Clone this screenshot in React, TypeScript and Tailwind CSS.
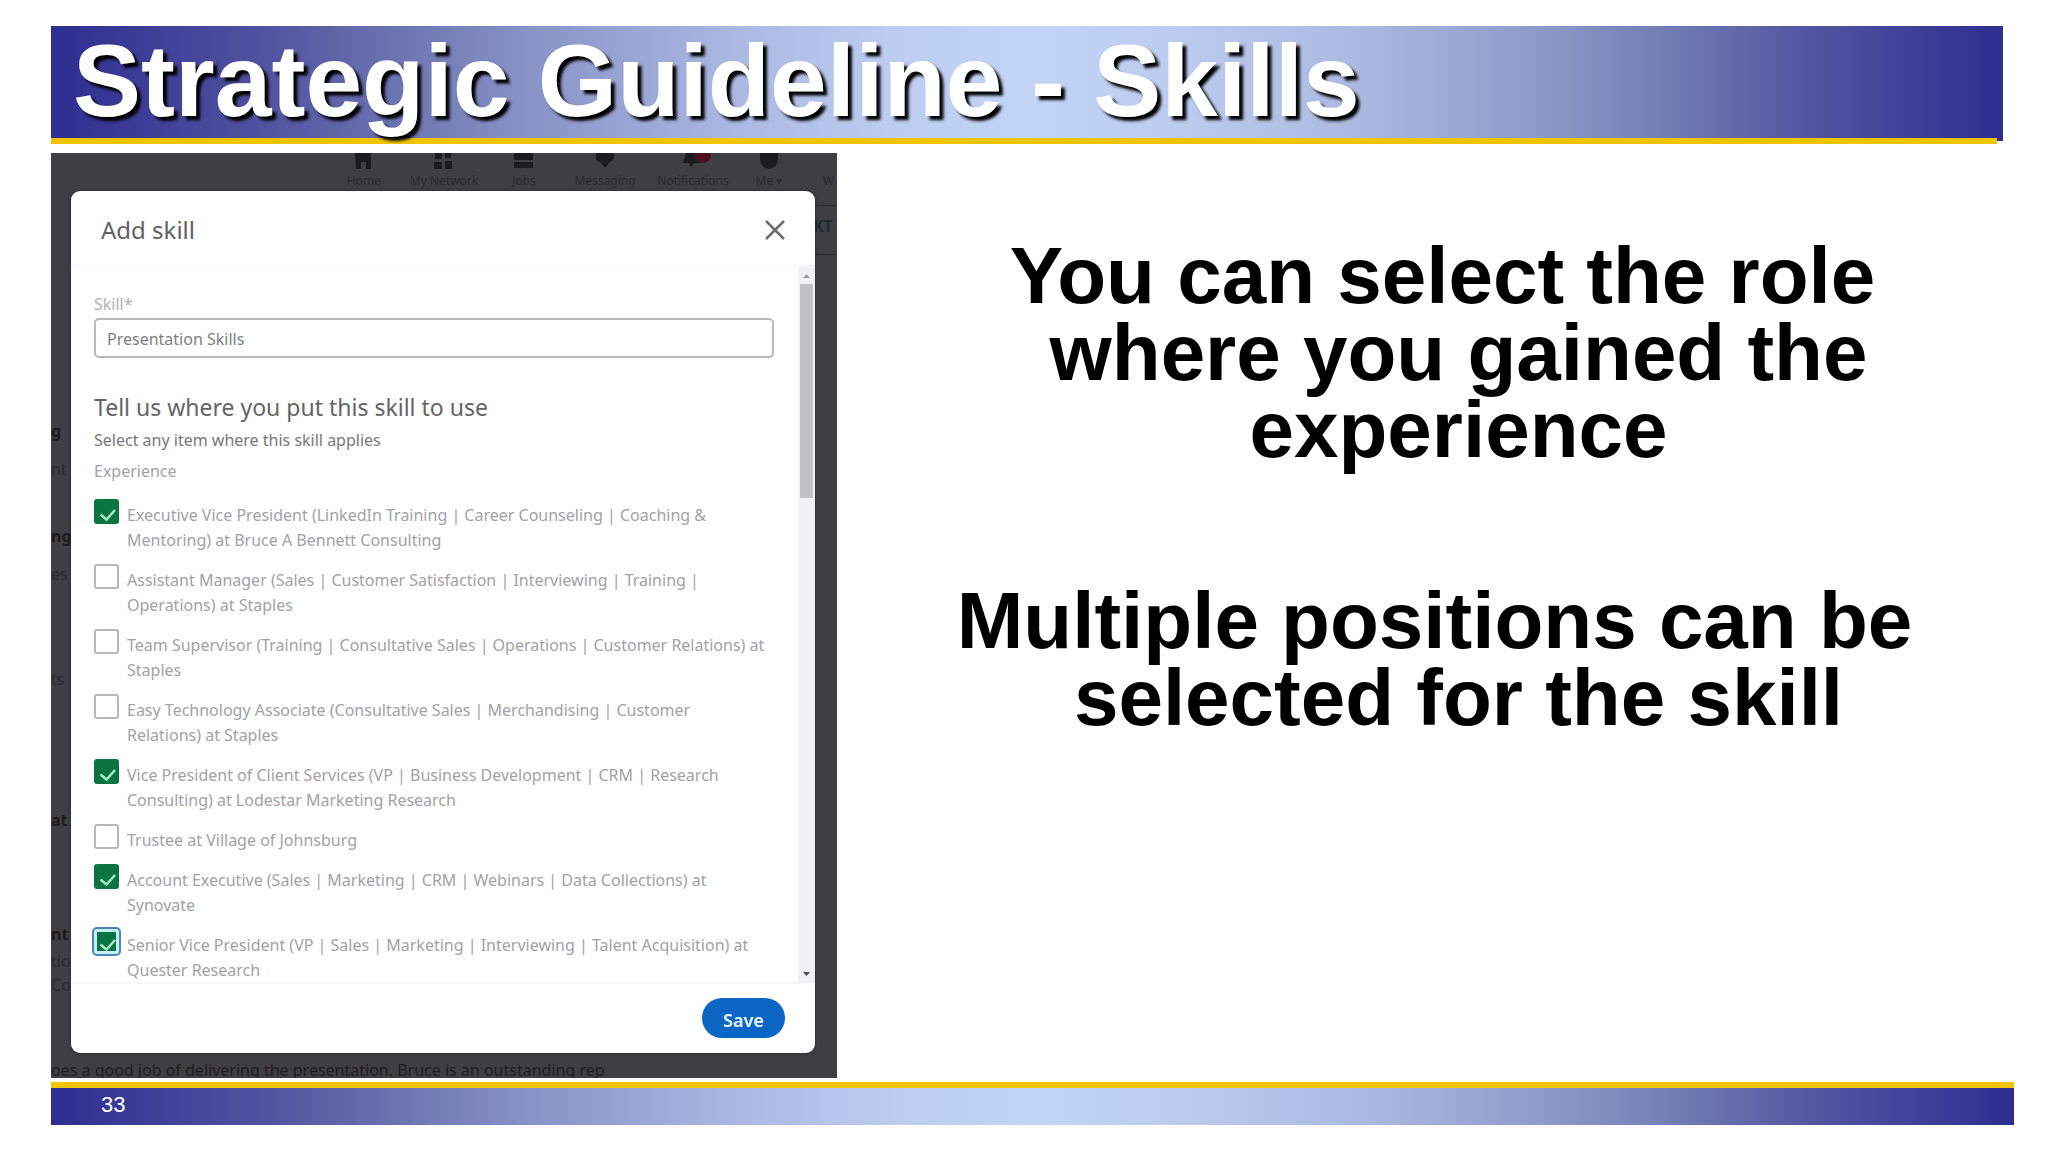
import { useState } from "react";

const BAR =
  "bg-[linear-gradient(to_right,#2e2d91_0%,#5153a0_11%,#717ab4_19%,#8691c5_24%,#abb8e2_35%,#bccdf0_43%,#c2d5f7_50%,#bccdf0_57%,#abb9e0_67%,#8e9bc9_76%,#7581b6_82%,#5255a0_90%,#2e2d91_100%)]";

type Item = { lines: string[]; checked: boolean; focused?: boolean };

const ITEMS: Item[] = [
  {
    lines: [
      "Executive Vice President (LinkedIn Training | Career Counseling | Coaching &",
      "Mentoring) at Bruce A Bennett Consulting",
    ],
    checked: true,
  },
  {
    lines: [
      "Assistant Manager (Sales | Customer Satisfaction | Interviewing | Training |",
      "Operations) at Staples",
    ],
    checked: false,
  },
  {
    lines: [
      "Team Supervisor (Training | Consultative Sales | Operations | Customer Relations) at",
      "Staples",
    ],
    checked: false,
  },
  {
    lines: [
      "Easy Technology Associate (Consultative Sales | Merchandising | Customer",
      "Relations) at Staples",
    ],
    checked: false,
  },
  {
    lines: [
      "Vice President of Client Services (VP | Business Development | CRM | Research",
      "Consulting) at Lodestar Marketing Research",
    ],
    checked: true,
  },
  { lines: ["Trustee at Village of Johnsburg"], checked: false },
  {
    lines: [
      "Account Executive (Sales | Marketing | CRM | Webinars | Data Collections) at",
      "Synovate",
    ],
    checked: true,
  },
  {
    lines: [
      "Senior Vice President (VP | Sales | Marketing | Interviewing | Talent Acquisition) at",
      "Quester Research",
    ],
    checked: true,
    focused: true,
  },
];

function SkillOption({ item, id }: { item: Item; id: string }) {
  const [checked, setChecked] = useState(item.checked);
  return (
    <li className="flex items-start gap-2 pb-[11px]">
      <span className="relative size-[25px] shrink-0">
        <input
          id={id}
          type="checkbox"
          checked={checked}
          onChange={(e) => setChecked(e.target.checked)}
          className={
            item.focused
              ? "block size-[25px] appearance-none rounded-[3px] border-[3px] border-[#c4f0f2] bg-white outline-2 outline-[#4a86b8] checked:bg-[#0b7443]"
              : "block size-[25px] appearance-none rounded-[3px] border-2 border-[#b8b7ba] bg-white checked:border-[#0b7443] checked:bg-[#0b7443]"
          }
        />
        {checked && (
          <svg
            viewBox="0 0 25 25"
            className="pointer-events-none absolute inset-0 size-full"
            fill="none"
            stroke="#a9ecc4"
            strokeWidth="2.5"
          >
            <path d="M6.5 15.500 L12.500 20.500 L21 11" />
          </svg>
        )}
      </span>
      <label htmlFor={id} className="pt-1 whitespace-nowrap">
        {item.lines.map((line) => (
          <span key={line} className="block">
            {line}
          </span>
        ))}
      </label>
    </li>
  );
}

const NAV = [
  { label: "Home", left: "left-[273px]", icon: "M1 0H17V16H12V9H7V16H2Z" },
  { label: "My Network", left: "left-[353px]", icon: "M1 0H8V6H1ZM11 0H17V5H11ZM0 9H8V16H0ZM11 8H18V16H11Z" },
  { label: "Jobs", left: "left-[433px]", icon: "M0 0H19V7H0ZM0 9H19V15H0Z" },
  { label: "Messaging", left: "left-[514px]", icon: "M1 0H19V6L14 10L10 15L6 10L1 7Z" },
  { label: "Notifications", left: "left-[602px]", icon: "M3 0H17L19 10H11L8 14L6 10H0Z" },
  { label: "Me ▾", left: "left-[678px]", icon: "M1 0H19V6A9 10 0 0 1 1 6Z" },
];

const EDGE = [
  { text: "g", top: "top-[266px]", bold: true },
  { text: "nt", top: "top-[304px]", bold: false },
  { text: "ng", top: "top-[371px]", bold: true },
  { text: "es", top: "top-[409px]", bold: false },
  { text: "ts", top: "top-[514px]", bold: false },
  { text: "at", top: "top-[655px]", bold: true },
  { text: "nt", top: "top-[769px]", bold: true },
  { text: "tio", top: "top-[796px]", bold: false },
  { text: "Co", top: "top-[820px]", bold: false },
];

function Backdrop() {
  return (
    <div aria-hidden="true" className="absolute inset-0 overflow-hidden text-[#2b2b2d]">
      {NAV.map((n) => (
        <div key={n.label} className={`absolute top-0 w-20 text-center ${n.left}`}>
          <div className="relative mx-auto h-5 w-5">
            <svg viewBox="0 0 20 20" className="h-5 w-5 fill-[#1c1c1e]">
              <path d={n.icon} />
            </svg>
            {n.label === "Notifications" && (
              <span className="absolute top-0 left-3 h-2.5 w-4 rounded-b-full bg-[#4c0f1f]" />
            )}
          </div>
          <div className="text-xs leading-4 whitespace-nowrap">{n.label}</div>
        </div>
      ))}
      <div className="absolute top-[20px] left-[772px] text-xs leading-4">W</div>
      <div className="absolute top-[52px] right-0 h-[50px] w-6 border-y border-[#2c2c2e] pt-2 text-base font-bold text-[#1c2a3a]">
        KT
      </div>
      {EDGE.map((e) => (
        <div
          key={e.top}
          className={`absolute left-0 text-base leading-6 ${e.top} ${e.bold ? "font-bold text-[#1b1b1d]" : ""}`}
        >
          {e.text}
        </div>
      ))}
      <div className="absolute bottom-0 left-0 text-base leading-4 whitespace-nowrap text-[#1f1f21]">
        oes a good job of delivering the presentation. Bruce is an outstanding rep
      </div>
    </div>
  );
}

function AddSkillDialog() {
  return (
    <section
      role="dialog"
      aria-labelledby="dialog-title"
      className="relative flex flex-col overflow-hidden rounded-[9px] bg-[#fefefe] shadow-[0_0_3px_#222]"
    >
      <header className="flex h-[75px] items-center justify-between border-b border-[#f5f5f7] px-[30px] pt-1">
        <h2 id="dialog-title" className="text-2xl text-[#626264]">
          Add skill
        </h2>
        <button type="button" aria-label="Close">
          <svg viewBox="0 0 20 20" className="size-5" fill="none" stroke="#6d6d6f" strokeWidth="2.5">
            <path d="M1 1L19 19M19 1L1 19" />
          </svg>
        </button>
      </header>

      <div className="flex">
        <div className="min-w-0 flex-1 pt-[26px] pr-6 pl-[23px] text-base leading-[25px] text-[#a3a2a5]">
          <label htmlFor="skill" className="block text-[#b1b0b3]">
            Skill*
          </label>
          <input
            id="skill"
            type="text"
            defaultValue="Presentation Skills"
            className="mt-px block h-10 w-full rounded-[5px] border-2 border-[#b9b8bb] bg-[#fefefe] px-[11px] pt-0.5 text-[#7f7e81]"
          />
          <h3 className="mt-[34px] text-[23px] leading-[30px] text-[#656567]">
            Tell us where you put this skill to use
          </h3>
          <p className="mt-1.5 text-[#79787b]">Select any item where this skill applies</p>
          <p className="mt-1.5">Experience</p>
          <ul className="-mb-[11px] pt-[15px]">
            {ITEMS.map((item, i) => (
              <SkillOption key={item.lines[0]} item={item} id={`role-${i}`} />
            ))}
          </ul>
        </div>
        <div aria-hidden="true" className="flex w-[17px] flex-col items-center bg-[#f1f0f2]">
          <svg viewBox="0 0 17 18" className="h-[18px] w-full fill-[#9b9b9d]">
            <path d="M5 12L8.500 8L12 12Z" />
          </svg>
          <div className="h-[214px] w-[13px] bg-[#c2c1c3]" />
          <svg viewBox="0 0 17 18" className="mt-auto h-[18px] w-full fill-[#4d4d4f]">
            <path d="M5 7L8.500 11L12 7Z" />
          </svg>
        </div>
      </div>

      <footer className="flex justify-end border-t border-[#f5f5f7] pt-3.5 pr-[30px] pb-[15px]">
        <button
          type="button"
          className="h-10 w-[83px] rounded-full bg-[#0b66c3] pt-1 text-lg font-semibold text-[#e6f3fd]"
        >
          Save
        </button>
      </footer>
    </section>
  );
}

export default function App() {
  return (
    <main className="min-h-screen bg-[#fefefe] pt-[26px] pl-[51px] font-['Liberation_Sans',Arial,sans-serif]">
      <header className={`relative mr-[45px] h-[115px] pt-1 pl-[22px] ${BAR}`}>
        <div className="absolute top-[112px] right-1.5 left-0 h-1.5 bg-[#f2c406]" />
        <h1 className="relative text-[102px] leading-none font-bold whitespace-nowrap text-white [text-shadow:4px_4px_3px_#000]">
          Strategic Guideline - Skills
        </h1>
      </header>

      <div className="mt-3 flex">
        <div className="relative w-[786px] shrink-0 bg-[#3f3e40] pt-[38px] pr-[22px] pb-[25px] pl-5 font-['Noto_Sans',sans-serif]">
          <Backdrop />
          <AddSkillDialog />
        </div>

        <div className="flex-1 pt-[84px] pl-8 text-center text-[80px] leading-[77px] font-bold text-black">
          <p className="-indent-8">
            You can select the role
            <br />
            where you gained the
            <br />
            experience
          </p>
          <p className="mt-[114px] -indent-12">
            Multiple positions can be
            <br />
            selected for the skill
          </p>
        </div>
      </div>

      <footer className="mt-1 mr-[34px]">
        <div className="h-1.5 bg-[#f2c406]" />
        <div className={`flex h-[37px] items-center pb-1 pl-[50px] text-[22px] leading-none text-white ${BAR}`}>33</div>
      </footer>
    </main>
  );
}
